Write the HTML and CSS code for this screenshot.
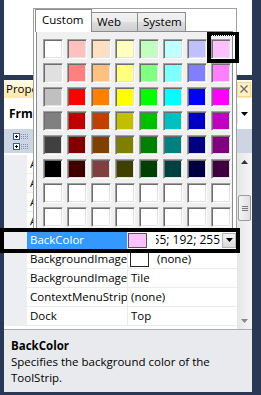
FILE: index.html
```html
<!DOCTYPE html>
<html>
<head>
<meta charset="utf-8">
<link rel="stylesheet" href="styles.css">
</head>
<body>
<div class="screen">
  <div class="doc"></div>
  <div class="props">
    <div class="titlebar">
      <span class="title">Properties</span>
      <span class="close"><svg width="8" height="8" viewBox="0 0 8 8"><path d="M0.5 0.5L7.5 7.5M7.5 0.5L0.5 7.5" stroke="#6b6b6b" stroke-width="1.4"/></svg></span>
    </div>
    <div class="objsel">
      <span class="objname">FrmMain</span>
      <span class="objtype">System.Windows.Forms.ToolStrip</span>
      <span class="combo-btn"><svg width="7" height="4" viewBox="0 0 7 4"><path d="M0 0h7L3.5 4z" fill="#000"/></svg></span>
    </div>
    <div class="toolbar">
      <span class="tbtn">
        <svg width="16" height="17" viewBox="0 0 16 17">
          <rect x="0.5" y="0.5" width="6" height="6" fill="#fff" stroke="#3d5a80"/>
          <path d="M2 3.5h3M3.5 2v3" stroke="#000"/>
          <path d="M8 1.5h7M8 3.5h7M8 5.5h7" stroke="#7f90aa" stroke-dasharray="1 1"/>
          <rect x="0.5" y="10.5" width="6" height="6" fill="#fff" stroke="#3d5a80"/>
          <path d="M2 13.5h3M3.5 12v3" stroke="#000"/>
          <path d="M8 11.5h7M8 13.5h7M8 15.5h7" stroke="#7f90aa" stroke-dasharray="1 1"/>
        </svg>
      </span>
      <span class="tbtn pressed"></span>
    </div>
    <div class="grid">
      <div class="rows">
        <div class="row"><span class="margin"></span><span class="name">AllowItemReorder</span><span class="value">False</span></div>
        <div class="row"><span class="margin"></span><span class="name">AllowMerge</span><span class="value">True</span></div>
        <div class="row"><span class="margin"></span><span class="name">Anchor</span><span class="value">Top, Left</span></div>
        <div class="row"><span class="margin"></span><span class="name">AutoSize</span><span class="value">True</span></div>
        <div class="row selected"><span class="margin"></span><span class="name">BackColor</span><span class="value">
          <span class="sw sw-pink"></span><span class="edit"><span>255; 192; 255</span></span><span class="dd"><svg width="7" height="4" viewBox="0 0 7 4"><path d="M0 0h7L3.5 4z" fill="#000"/></svg></span>
        </span></div>
        <div class="row"><span class="margin"></span><span class="name">BackgroundImage</span><span class="value"><span class="sw"></span><span class="after-sw">(none)</span></span></div>
        <div class="row"><span class="margin"></span><span class="name">BackgroundImageLayout</span><span class="value">Tile</span></div>
        <div class="row"><span class="margin"></span><span class="name">ContextMenuStrip</span><span class="value">(none)</span></div>
        <div class="row"><span class="margin"></span><span class="name">Dock</span><span class="value">Top</span></div>
      </div>
      <div class="vscroll">
        <span class="sb-btn"><svg width="7" height="4" viewBox="0 0 7 4"><path d="M0 4h7L3.5 0z" fill="#333"/></svg></span>
        <span class="sb-gap"></span>
        <span class="sb-thumb"><span class="grip"></span></span>
        <span class="sb-rest"></span>
        <span class="sb-btn"><svg width="7" height="4" viewBox="0 0 7 4"><path d="M0 0h7L3.5 4z" fill="#888"/></svg></span>
      </div>
    </div>
    <div class="desc">
      <div class="desc-title">BackColor</div>
      <div class="desc-text">Specifies the background color of the ToolStrip.</div>
    </div>
  </div>

  <div class="popup">
    <div class="tabs">
      <span class="tab active">Custom</span>
      <span class="tab web">Web</span>
      <span class="tab system">System</span>
    </div>
    <div class="tabpage">
      <div class="palette">
        <span class="swatch" style="background:#ffffff"></span><span class="swatch" style="background:#ffc0c0"></span><span class="swatch" style="background:#ffe0c0"></span><span class="swatch" style="background:#ffffc0"></span><span class="swatch" style="background:#c0ffc0"></span><span class="swatch" style="background:#c0ffff"></span><span class="swatch" style="background:#c0c0ff"></span><span class="swatch" style="background:#ffc0ff"></span>
        <span class="swatch" style="background:#e0e0e0"></span><span class="swatch" style="background:#ff8080"></span><span class="swatch" style="background:#ffc080"></span><span class="swatch" style="background:#ffff80"></span><span class="swatch" style="background:#80ff80"></span><span class="swatch" style="background:#80ffff"></span><span class="swatch" style="background:#8080ff"></span><span class="swatch" style="background:#ff80ff"></span>
        <span class="swatch" style="background:#c0c0c0"></span><span class="swatch" style="background:#ff0000"></span><span class="swatch" style="background:#ff8000"></span><span class="swatch" style="background:#ffff00"></span><span class="swatch" style="background:#00ff00"></span><span class="swatch" style="background:#00ffff"></span><span class="swatch" style="background:#0000ff"></span><span class="swatch" style="background:#ff00ff"></span>
        <span class="swatch" style="background:#808080"></span><span class="swatch" style="background:#c00000"></span><span class="swatch" style="background:#c04000"></span><span class="swatch" style="background:#c0c000"></span><span class="swatch" style="background:#00c000"></span><span class="swatch" style="background:#00c0c0"></span><span class="swatch" style="background:#0000c0"></span><span class="swatch" style="background:#c000c0"></span>
        <span class="swatch" style="background:#404040"></span><span class="swatch" style="background:#800000"></span><span class="swatch" style="background:#804000"></span><span class="swatch" style="background:#808000"></span><span class="swatch" style="background:#008000"></span><span class="swatch" style="background:#008080"></span><span class="swatch" style="background:#000080"></span><span class="swatch" style="background:#800080"></span>
        <span class="swatch" style="background:#000000"></span><span class="swatch" style="background:#400000"></span><span class="swatch" style="background:#804040"></span><span class="swatch" style="background:#404000"></span><span class="swatch" style="background:#004000"></span><span class="swatch" style="background:#004040"></span><span class="swatch" style="background:#000040"></span><span class="swatch" style="background:#400040"></span>
        <span class="swatch"></span><span class="swatch"></span><span class="swatch"></span><span class="swatch"></span><span class="swatch"></span><span class="swatch"></span><span class="swatch"></span><span class="swatch"></span>
        <span class="swatch"></span><span class="swatch"></span><span class="swatch"></span><span class="swatch"></span><span class="swatch"></span><span class="swatch"></span><span class="swatch"></span><span class="swatch"></span>
        <span class="swatch"></span><span class="swatch"></span><span class="swatch"></span><span class="swatch"></span><span class="swatch"></span><span class="swatch"></span><span class="swatch"></span><span class="swatch"></span>
      </div>
    </div>
  </div>

  <div class="mark mark-swatch"></div>
  <div class="mark mark-row"></div>
</div>
</body>
</html>
```

FILE: styles.css
```css
* { box-sizing: border-box; }
html, body { margin: 0; padding: 0; }
body {
  width: 261px;
  height: 395px;
  overflow: hidden;
  background: #293955;
  font-family: "Open Sans", "Segoe UI", sans-serif;
  font-size: 11px;
  color: #000;
}
.screen {
  position: relative;
  width: 261px;
  height: 395px;
  display: flex;
  flex-direction: column;
  padding: 0 9px 3px 4px;
}
.doc { height: 75px; flex: none; background: #fff; }

.props {
  margin-top: 5px;
  height: 312px;
  flex: none;
  display: flex;
  flex-direction: column;
  background: #fff;
}
.titlebar {
  height: 18px;
  flex: none;
  display: flex;
  align-items: center;
  justify-content: space-between;
  padding: 0 1px 0 2px;
  background: linear-gradient(#fffbee, #fff1c8 50%, #ffe8a6);
}
.title { font-size: 11.5px; line-height: 18px; }
.close {
  width: 14px;
  height: 15px;
  display: flex;
  align-items: center;
  justify-content: center;
  border: 1px solid #efd89a;
  background: #fff0c4;
}
.objsel {
  height: 31px;
  flex: none;
  display: flex;
  align-items: center;
  padding: 0 2px 0 5px;
  white-space: nowrap;
  overflow: hidden;
}
.objname { font-weight: bold; font-size: 12px; }
.objtype { margin-left: 4px; flex: 1; overflow: hidden; }
.combo-btn {
  width: 13px;
  height: 21px;
  display: flex;
  align-items: center;
  justify-content: center;
  border-left: 1px solid #e2e4e8;
}
.toolbar {
  height: 24px;
  flex: none;
  display: flex;
  align-items: center;
  padding-left: 6px;
  gap: 2px;
  background: #cdd5e3;
}
.tbtn {
  width: 22px;
  height: 22px;
  display: flex;
  align-items: center;
  justify-content: center;
}
.tbtn.pressed { background: #ffe8a6; border: 1px solid #e5c365; }

.grid { height: 176px; flex: none; display: flex; }
.rows { width: 233px; padding-top: 2px; }
.row {
  display: grid;
  grid-template-columns: 23px 101px 109px;
  height: 19px;
  line-height: 18px;
  font-size: 11.5px;
}
.margin { background: #eceef1; }
.name, .value {
  border-bottom: 1px solid #ebebeb;
  white-space: nowrap;
  overflow: hidden;
  padding-left: 3px;
}
.name { border-right: 1px solid #ebebeb; }
.value { display: flex; align-items: center; }
.selected .name { background: #3399ff; color: #fff; }
.selected .value { padding-left: 1px; }
.sw {
  flex: none;
  width: 19px;
  height: 15px;
  border: 1px solid #222;
  background: #fff;
}
.value > .sw:first-child { margin-left: -1px; }
.sw-pink { background: #ffc0ff; border-color: #555; }
.edit {
  flex: 1;
  display: flex;
  justify-content: flex-end;
  overflow: hidden;
  white-space: nowrap;
  margin-left: 9px;
  padding-right: 2px;
  font-size: 12px;
}
.edit span { flex: none; }
.dd {
  flex: none;
  width: 14px;
  height: 15px;
  margin-right: 1px;
  display: flex;
  align-items: center;
  justify-content: center;
  background: linear-gradient(#f4f4f4, #dadada);
  border: 1px solid #b5b5b5;
}
.after-sw { margin-left: 8px; }

.vscroll {
  width: 15px;
  display: flex;
  flex-direction: column;
  background: linear-gradient(90deg, #e6e6e6, #f6f6f6);
}
.sb-btn {
  height: 17px;
  flex: none;
  display: flex;
  align-items: center;
  justify-content: center;
}
.sb-gap { height: 25px; flex: none; }
.sb-thumb {
  height: 26px;
  flex: none;
  margin: 0 1px;
  border: 1px solid #9c9c9c;
  border-radius: 2px;
  background: linear-gradient(90deg, #f3f3f3, #e0e0e0);
  display: flex;
  align-items: center;
  justify-content: center;
}
.grip {
  width: 6px;
  height: 5px;
  background: repeating-linear-gradient(#7a7a7a 0 1px, transparent 1px 2px);
}
.sb-rest { flex: 1; }

.desc {
  flex: 1;
  border-top: 1px solid #a9adb4;
  background: #e8eaee;
  padding: 8px 6px 0 7px;
  line-height: 16px;
  font-size: 11.5px;
}
.desc-title { font-weight: bold; }

.popup {
  position: absolute;
  left: 33px;
  top: 8px;
  width: 204px;
  height: 221px;
  background: #fff;
  border: 1px solid #a0a0a0;
  overflow: hidden;
  display: flex;
  flex-direction: column;
}
.tabs {
  height: 22px;
  flex: none;
  display: flex;
  align-items: flex-end;
  padding-left: 1px;
}
.tab {
  height: 19px;
  border: 1px solid #898c95;
  border-bottom: none;
  padding-left: 5px;
  font-size: 11.5px;
  line-height: 18px;
  background: linear-gradient(#f2f2f2, #ebebeb 50%, #dddddd 50%, #cfcfcf);
}
.tab.active {
  position: relative;
  z-index: 1;
  height: 23px;
  margin-bottom: -1px;
  width: 57px;
  padding-left: 6px;
  line-height: 20px;
  background: #fff;
}
.tab.web { width: 47px; margin-left: -1px; }
.tab.system { width: 49px; margin-left: -1px; }
.tabpage {
  flex: 1;
  margin: 0 3px 0 2px;
  border: 1px solid #898c95;
  background: #f0f0f0;
  padding: 7px 0 0 6px;
}
.palette {
  display: grid;
  grid-template-columns: repeat(8, 20px);
  grid-auto-rows: 20px;
  gap: 4px;
}
.swatch {
  background: #fff;
  border: 1px solid;
  border-color: #a0a0a0 #ffffff #ffffff #a0a0a0;
  box-shadow: inset 1px 1px 0 #6e6e6e, inset -1px -1px 0 #e3e3e3;
}

.mark { position: absolute; border: 4px solid #000; }
.mark-swatch {
  left: 207px;
  top: 32px;
  width: 32px;
  height: 31px;
  border-top-width: 3px;
}
.mark-swatch::after {
  content: "";
  position: absolute;
  left: 0;
  right: 0;
  top: 0;
  height: 1px;
  background: repeating-linear-gradient(90deg, #000 0 1px, #fff 1px 2px);
}
.mark-row {
  left: 0;
  top: 228px;
  width: 240px;
  height: 25px;
}
```
